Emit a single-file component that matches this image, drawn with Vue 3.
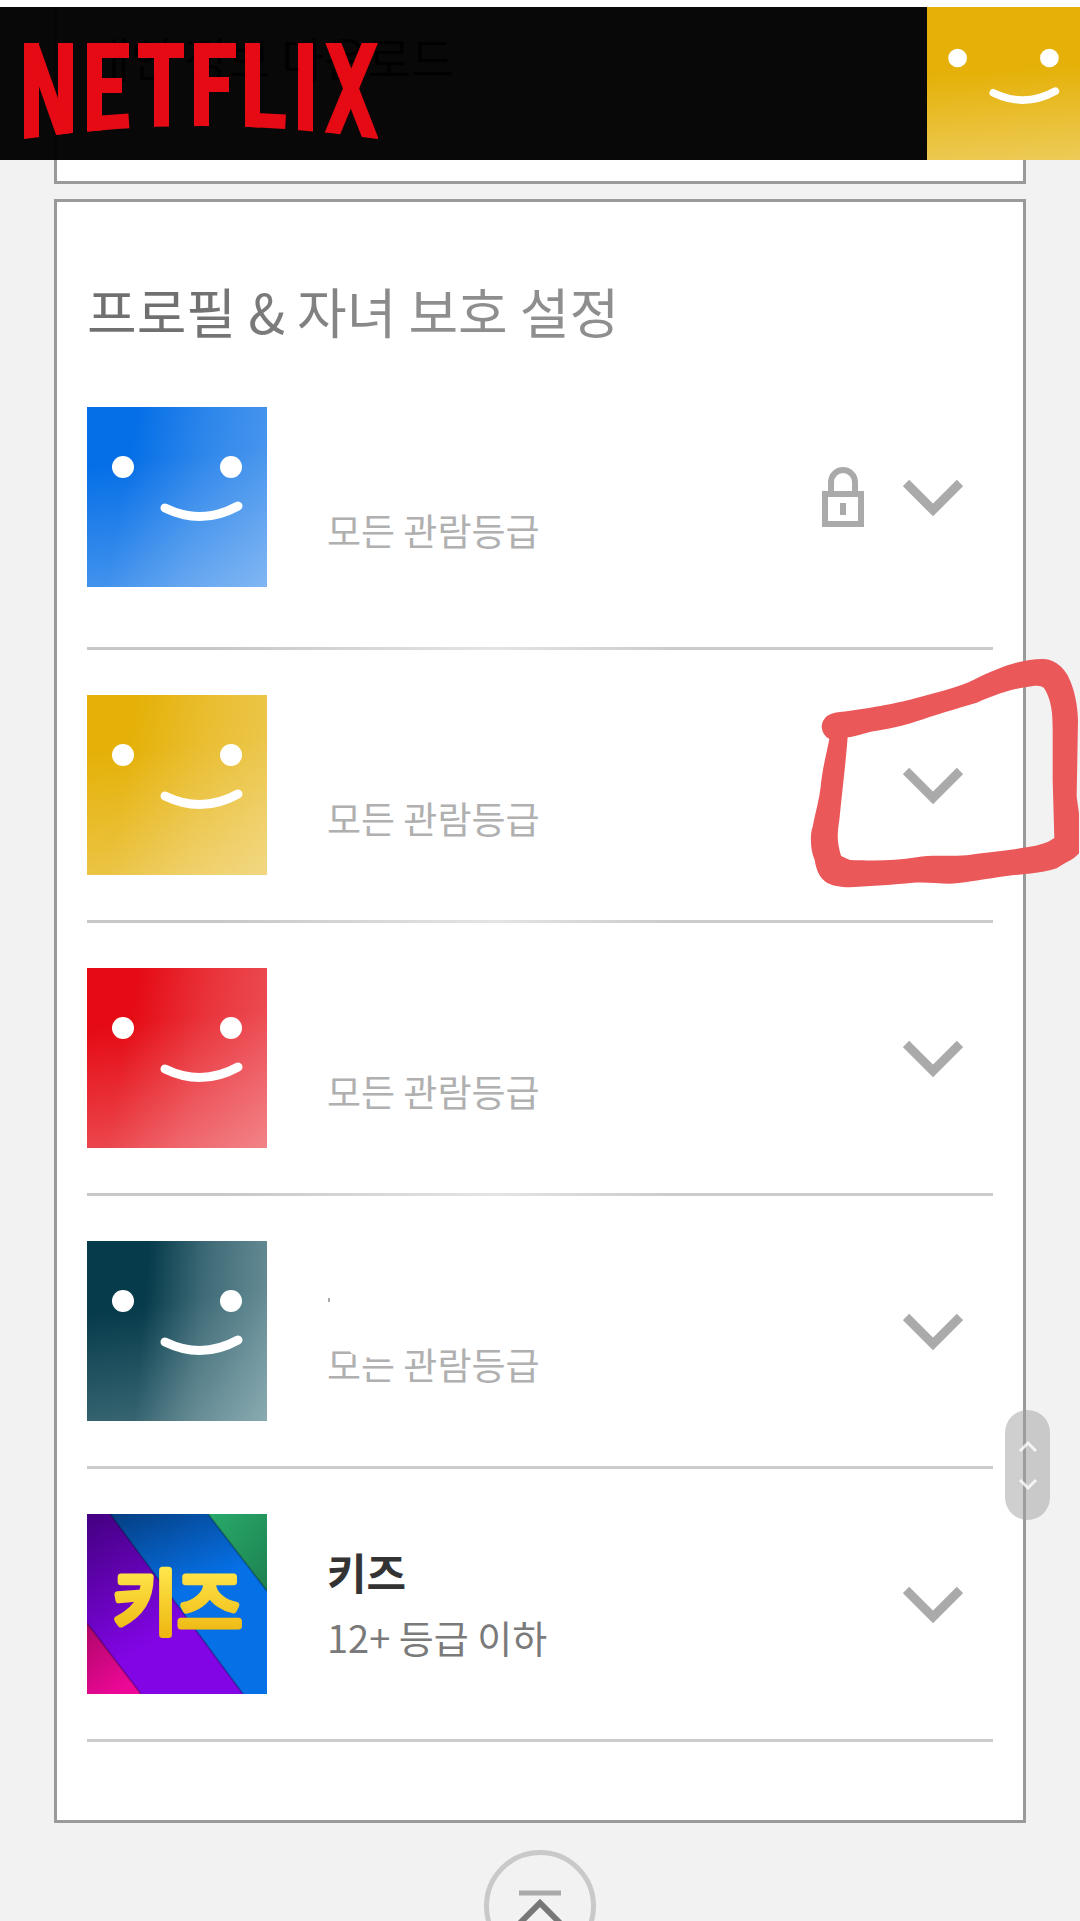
<script setup>
const profiles = [
  { id: 'blue', name: '', rating: '모든 관람등급', locked: true, tone: 'blue' },
  { id: 'yellow', name: '', rating: '모든 관람등급', tone: 'yellow', marked: true },
  { id: 'red', name: '', rating: '모든 관람등급', tone: 'red' },
  { id: 'navy', name: '', rating: '모든 관람등급', tone: 'navy', smudged: true },
  { id: 'kids', name: '키즈', rating: '12+ 등급 이하', tone: 'kids' },
]
</script>

<template>
  <div class="page">
    <div class="strip"></div>
    <header class="topbar">
      <a class="brand" href="#" aria-label="NETFLIX">
        <svg class="logo" viewBox="24 43 354 96" aria-hidden="true">
          <clipPath id="arc"><path d="M24 43H378V139Q201 113 24 139Z" /></clipPath>
          <g clip-path="url(#arc)" stroke="#e50a13" stroke-width="15" fill="none">
            <line x1="31.5" y1="43" x2="31.5" y2="140" />
            <line x1="65.5" y1="43" x2="65.5" y2="140" />
            <line x1="27.5" y1="33" x2="68.5" y2="149" stroke-width="14" />
            <line x1="94.5" y1="43" x2="94.5" y2="140" />
            <line x1="87" y1="50.5" x2="129" y2="50.5" />
            <line x1="87" y1="85.5" x2="122" y2="85.5" />
            <line x1="88" y1="125" x2="129" y2="122" stroke-width="17" />
            <line x1="138" y1="50.5" x2="184" y2="50.5" />
            <line x1="161.5" y1="43" x2="161.5" y2="140" />
            <line x1="201.5" y1="43" x2="201.5" y2="140" />
            <line x1="194" y1="50.5" x2="236" y2="50.5" />
            <line x1="194" y1="84.5" x2="229" y2="84.5" />
            <line x1="252.5" y1="43" x2="252.5" y2="140" />
            <line x1="246" y1="121" x2="285.5" y2="123" stroke-width="17" />
            <line x1="305.5" y1="43" x2="305.5" y2="140" />
            <line x1="329.5" y1="33" x2="374.5" y2="149" />
            <line x1="374" y1="33" x2="326" y2="149" />
          </g>
        </svg>
      </a>
      <button class="me" aria-label="프로필">
        <svg class="face" viewBox="0 0 180 180" aria-hidden="true">
          <circle cx="36" cy="60" r="11" />
          <circle cx="144" cy="60" r="11" />
          <path d="M78 101Q115 119 151 99" />
        </svg>
      </button>
    </header>

    <section class="card previous">
      <a class="download" href="#">개인 정보 다운로드</a>
    </section>

    <section class="card">
      <h1>프로필 &amp; 자녀 보호 설정</h1>
      <ul class="profiles">
        <li v-for="p in profiles" :key="p.id" :class="p.tone">
          <div class="avatar">
            <svg v-if="p.tone === 'kids'" class="kidsart" viewBox="0 0 180 180" aria-hidden="true">
              <defs>
                <linearGradient id="kb" x1="0" y1="0" x2="0.4" y2="1">
                  <stop offset="0" stop-color="#053a78" /><stop offset="0.55" stop-color="#0670e6" />
                </linearGradient>
                <linearGradient id="kp" x1="0" y1="0" x2="0.5" y2="1">
                  <stop offset="0" stop-color="#430080" /><stop offset="0.75" stop-color="#8205e6" />
                </linearGradient>
                <linearGradient id="kk" x1="0" y1="0" x2="0.6" y2="1">
                  <stop offset="0" stop-color="#ad0668" /><stop offset="1" stop-color="#ee0898" />
                </linearGradient>
                <linearGradient id="kg" x1="0" y1="0" x2="1" y2="1">
                  <stop offset="0" stop-color="#29aa6b" /><stop offset="1" stop-color="#1d8150" />
                </linearGradient>
                <linearGradient id="ky" x1="0" y1="0" x2="0" y2="1">
                  <stop offset="0.2" stop-color="#ffe64b" /><stop offset="0.9" stop-color="#edb50e" />
                </linearGradient>
              </defs>
              <rect width="180" height="180" fill="url(#kb)" />
              <path d="M121 0H180V77Z" fill="url(#kg)" />
              <path d="M0 0H23L156 180H0Z" fill="url(#kp)" />
              <path d="M0 109L54 180H0Z" fill="url(#kk)" />
              <path d="M121 0L180 77M23 0L156 180M0 109L54 180" stroke="#001" stroke-opacity=".25" stroke-width="2" />
              <text x="26" y="115" font-size="70" fill="url(#ky)" stroke="url(#ky)">키즈</text>
            </svg>
            <svg v-else class="face" viewBox="0 0 180 180" aria-hidden="true">
              <circle cx="36" cy="60" r="11" />
              <circle cx="144" cy="60" r="11" />
              <path d="M78 101Q115 119 151 99" />
            </svg>
          </div>
          <div class="info">
            <h2>{{ p.name }}</h2>
            <p>{{ p.rating }}</p>
            <svg v-if="p.smudged" class="smudge" viewBox="0 0 90 90" aria-hidden="true">
              <path d="M2 33V37" stroke="#aaa" stroke-width="2" />
              <path d="M17 76L24 88L30 91Q46 94 69 93V74H17Z" fill="#fff" />
            </svg>
          </div>
          <svg v-if="p.locked" class="icon" viewBox="0 0 60 60" role="img" aria-label="잠김">
            <path d="M18 27V15A12 12 0 0 1 42 15V27M12 27H48V57H12ZM30 36V48" />
          </svg>
          <button class="toggle" aria-label="펼치기">
            <svg class="icon chevron" viewBox="0 0 60 60" aria-hidden="true">
              <path d="M3 16L30 43L57 16" />
            </svg>
          </button>
          <svg v-if="p.marked" class="marker" viewBox="90 690 810 720" aria-hidden="true">
            <path
              fill-rule="evenodd"
              d="M125 920Q128 880 180 876C260 866 350 850 400 836C480 816 540 800 580 780C660 740 730 716 790 717C830 718 855 750 865 770C885 810 893 860 894 900L890 1130L897 1180V1300C880 1320 860 1325 830 1345C780 1362 720 1362 680 1368C620 1376 560 1388 510 1391C470 1390 440 1386 400 1388C340 1394 280 1397 210 1402C150 1400 115 1390 104 1320C90 1290 90 1240 98 1220C105 1180 118 1140 122 1100C128 1040 140 1000 148 957Q127 945 125 920Z
                 M203 952C230 950 250 940 280 934C320 928 370 918 410 904C460 886 530 866 590 848C650 822 690 808 735 802C765 796 780 794 792 804C815 840 818 880 818 930V1080L823 1254C800 1270 780 1275 740 1282C680 1292 620 1296 560 1306C500 1310 450 1304 410 1312C340 1324 270 1322 210 1320C190 1310 185 1310 182 1304C170 1260 172 1240 178 1200C186 1120 196 1040 203 952Z"
            />
          </svg>
        </li>
      </ul>
    </section>

    <footer>
      <button class="totop" aria-label="맨 위로">
        <svg viewBox="0 0 102 102" aria-hidden="true">
          <path d="M30 38H72" stroke="#aaa" stroke-width="5" />
          <path d="M31 68L51 48L71 68" stroke="#777" stroke-width="6" />
        </svg>
      </button>
    </footer>

    <div class="scroller">
      <svg viewBox="0 0 45 110" aria-hidden="true">
        <path d="M15 41L23 33L31 41M15 70L23 78L31 70" />
      </svg>
    </div>
  </div>
</template>

<style>
body {
  margin: 0;
  background: #f2f2f2;
}
</style>

<style scoped>
.page {
  height: 100vh;
  overflow: hidden auto;
  scrollbar-width: none;
  background: #f2f2f2;
  color: #757575;
  font-family: "Noto Sans CJK KR", "Noto Sans", sans-serif;
}
h1, h2, p, ul {
  margin: 0;
  padding: 0;
}
button {
  padding: 0;
  border: 0;
  background: none;
}
svg {
  display: block;
}
.strip {
  height: 7px;
  background: #fff;
}
.topbar {
  position: sticky;
  top: 7px;
  z-index: 2;
  display: flex;
  justify-content: space-between;
  height: 153px;
  background: rgba(0, 0, 0, 0.97);
}
.brand {
  padding: 36px 24px;
}
.logo {
  width: 354px;
  height: 96px;
}
.me {
  width: 153px;
  background: linear-gradient(176deg, #e5b108 42%, #edcb58);
}
.face circle {
  fill: #fff;
}
.face path {
  fill: none;
  stroke: #fff;
  stroke-width: 9;
  stroke-linecap: round;
}
.card {
  margin: 0 54px 15px;
  padding: 70px 30px 78px;
  border: 3px solid #9a9a9a;
  background: #fff;
}
.previous {
  margin-top: -153px;
  padding: 17px 30px 91px;
  border-top: 0;
}
.download {
  display: block;
  color: #333;
  font-size: 47px;
  line-height: 66px;
  text-decoration: none;
}
h1 {
  width: fit-content;
  margin-bottom: 57px;
  font-size: 54px;
  font-weight: 400;
  line-height: 78px;
  color: transparent;
  background: linear-gradient(100deg, #707070 20%, #8e8e8e 60%);
  background-clip: text;
}
.profiles {
  list-style: none;
}
li {
  position: relative;
  display: flex;
  align-items: center;
  gap: 30px;
  padding: 45px 0 48px;
}
li::after {
  content: "";
  position: absolute;
  inset: auto 0 0;
  height: 3px;
  background: linear-gradient(90deg, #c8c8c8 15%, #e4e4e4 45%, #cbcbcb 65%);
}
li.blue {
  padding: 0 0 63px;
}
li.navy::after,
li.kids::after {
  background: #cbcbcb;
}
.avatar {
  width: 180px;
  height: 180px;
  background:
    linear-gradient(100deg, transparent 24%, rgba(255, 255, 255, 0.17) 60%, rgba(255, 255, 255, 0.3) 100%),
    linear-gradient(174deg, transparent 30%, rgba(255, 255, 255, 0.28) 100%),
    var(--tone);
}
.blue { --tone: #056fe7; }
.yellow { --tone: #e5b108; }
.red { --tone: #e50a13; }
.navy { --tone: #063b4b; }
.navy .avatar {
  background:
    linear-gradient(95deg, transparent 32%, rgba(225, 245, 245, 0.26) 62%, rgba(225, 245, 245, 0.46) 100%),
    linear-gradient(172deg, transparent 35%, rgba(225, 245, 245, 0.26) 100%),
    var(--tone);
}
.kidsart text {
  font-family: "Noto Sans CJK KR", sans-serif;
  font-weight: 400;
  stroke-width: 7;
  stroke-linejoin: round;
}
.info {
  position: relative;
  flex: 1;
  margin-left: 30px;
}
h2 {
  height: 66px;
  color: #333;
  font-size: 43px;
  font-weight: 700;
  line-height: 66px;
}
.info p {
  color: #b0b0b0;
  font-size: 37px;
  line-height: 66px;
}
.kids .info p {
  color: #7a7a7a;
  font-size: 38px;
}
.smudge {
  position: absolute;
  top: 0;
  left: 0;
  width: 90px;
  height: 90px;
  overflow: visible;
}
.icon {
  width: 60px;
  height: 60px;
  fill: none;
  stroke: #aaa;
  stroke-width: 6;
}
.chevron {
  stroke-width: 9;
}
.toggle {
  margin-right: 30px;
}
.marker {
  position: absolute;
  top: 0;
  right: -87px;
  z-index: 1;
  width: 270px;
  height: 240px;
  fill: #eb5859;
  pointer-events: none;
}
footer {
  display: flex;
  justify-content: center;
  padding: 12px 0 60px;
}
.totop {
  box-sizing: border-box;
  width: 112px;
  height: 112px;
  border: 5px solid #c9c9c9;
  border-radius: 50%;
}
.totop svg {
  fill: none;
}
.scroller {
  position: fixed;
  top: 1410px;
  right: 30px;
  z-index: 3;
  width: 45px;
  height: 110px;
  border-radius: 23px;
  background: rgba(160, 160, 160, 0.5);
}
.scroller path {
  fill: none;
  stroke: rgba(255, 255, 255, 0.8);
  stroke-width: 3;
}
</style>
